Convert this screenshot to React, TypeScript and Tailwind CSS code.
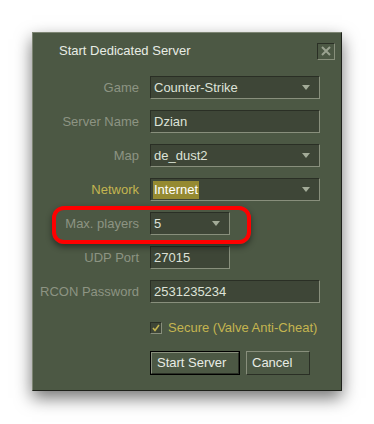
import React from "react";

const font = { fontFamily: '"Liberation Sans", Arial, sans-serif' };

const Arrow = () => (
  <svg width="8" height="5" viewBox="0 0 8 5" className="mr-[9px] shrink-0">
    <path d="M0 0H8L4 5Z" fill="#a3ab98" />
  </svg>
);

const Field = ({
  value,
  width,
  combo,
  highlight,
}: {
  value: string;
  width: string;
  combo?: boolean;
  highlight?: boolean;
}) => (
  <div
    className={`${width} h-[23px] flex items-center justify-between bg-[#3e4637] border border-t-[#2a2f25] border-l-[#2a2f25] border-b-[#888f7c] border-r-[#888f7c] text-[13px] text-[#dde2d8]`}
  >
    <span className={`ml-[2px] px-[1px] leading-[18px] ${highlight ? "bg-[#958a31] text-white" : ""}`}>{value}</span>
    {combo && <Arrow />}
  </div>
);

const Row = ({ label, gold, children }: { label: string; gold?: boolean; children: React.ReactNode }) => (
  <div className="flex items-center h-[23px]">
    <div className={`w-[106px] text-right text-[13px] ${gold ? "text-[#c4b550]" : "text-[#8d9483]"}`}>{label}</div>
    <div className="ml-[11px]">{children}</div>
  </div>
);

export default function App() {
  return (
    <div className="w-[374px] h-[424px] bg-white pt-[32px] pl-[32px]" style={font}>
      <div className="relative w-[310px] h-[359px] bg-[#4c5844] border border-t-[#7d8573] border-l-[#7d8573] border-b-[#1e211b] border-r-[#1e211b] shadow-[0_7px_16px_rgba(0,0,0,0.55)]">
        <div className="flex items-center justify-between h-[34px] pl-[26px] pr-[6px] pt-[2px]">
          <span className="text-[13px] text-[#e8ece4]">Start Dedicated Server</span>
          <div className="w-[18px] h-[17px] flex items-center justify-center border border-t-[#2a2f25] border-l-[#2a2f25] border-b-[#888f7c] border-r-[#888f7c]">
            <svg width="10" height="10" viewBox="0 0 10 10">
              <path d="M1 1L9 9M9 1L1 9" stroke="#9aa290" strokeWidth="2" />
            </svg>
          </div>
        </div>

        <div className="flex flex-col gap-[11px] mt-[9px]">
          <Row label="Game">
            <Field value="Counter-Strike" width="w-[170px]" combo />
          </Row>
          <Row label="Server Name">
            <Field value="Dzian" width="w-[170px]" />
          </Row>
          <Row label="Map">
            <Field value="de_dust2" width="w-[170px]" combo />
          </Row>
          <Row label="Network" gold>
            <Field value="Internet" width="w-[170px]" combo highlight />
          </Row>
          <Row label="Max. players">
            <Field value="5" width="w-[80px]" combo />
          </Row>
          <Row label="UDP Port">
            <Field value="27015" width="w-[80px]" />
          </Row>
          <Row label="RCON Password">
            <Field value="2531235234" width="w-[170px]" />
          </Row>
        </div>

        <div className="flex items-center gap-[6px] ml-[117px] mt-[18px] h-[13px]">
          <div className="w-[12px] h-[12px] flex items-center justify-center bg-[#3e4637] border border-t-[#2a2f25] border-l-[#2a2f25] border-b-[#888f7c] border-r-[#888f7c]">
            <svg width="8" height="8" viewBox="0 0 8 8">
              <path d="M1 4L3 6.5L7 1" stroke="#c4b550" strokeWidth="1.6" fill="none" />
            </svg>
          </div>
          <span className="text-[13px] text-[#c4b550]">Secure (Valve Anti-Cheat)</span>
        </div>

        <div className="flex gap-[6px] ml-[117px] mt-[17px]">
          <button className="w-[90px] h-[24px] border border-black text-left">
            <div className="h-full flex items-center pl-[5px] border border-t-[#888f7c] border-l-[#888f7c] border-b-[#2a2f25] border-r-[#2a2f25] text-[13px] text-[#e8ece4]">
              Start Server
            </div>
          </button>
          <button className="w-[64px] h-[24px] flex items-center pl-[5px] border border-t-[#888f7c] border-l-[#888f7c] border-b-[#2a2f25] border-r-[#2a2f25] text-[13px] text-[#e8ece4]">
            Cancel
          </button>
        </div>

        <div className="absolute left-[19px] top-[173px] w-[199px] h-[38px] rounded-[12px] border-[4px] border-[#ff0000] shadow-[0_3px_6px_rgba(0,0,0,0.45)]" />
      </div>
    </div>
  );
}
